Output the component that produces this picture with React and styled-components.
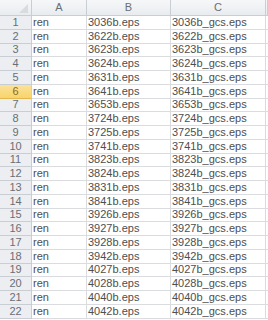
import styled, { createGlobalStyle } from "styled-components"

const GlobalStyle = createGlobalStyle`
    html, body {
        margin: 0;
        padding: 0;
        background: #ffffff;
    }
    body {
        font-family: "Liberation Sans", Arial, sans-serif;
    }
`

const rows = [
    "3036", "3622", "3623", "3624", "3631", "3641", "3653", "3724",
    "3725", "3741", "3823", "3824", "3831", "3841", "3926", "3927",
    "3928", "3942", "4027", "4028", "4040", "4042",
]

const Sheet = styled.div`
    display: grid;
    grid-template-columns: 32px 55px 84px 95px 2px;
    grid-template-rows: 16px repeat(22, 13.75px);
    width: 268px;
    height: 320px;
    overflow: hidden;
    font-size: 11px;
`
const HeadCell = styled.div`
    display: flex;
    align-items: center;
    justify-content: center;
    position: relative;
    background: linear-gradient(#f6f7f9, #e9ecef);
    border-right: 1px solid #c9ced4;
    border-bottom: 1px solid #c9ced4;
    color: #6a6e74;
    line-height: 1;
`
const RowHead = styled.div`
    display: flex;
    align-items: center;
    justify-content: center;
    background: ${(p) => (p.$active ? "linear-gradient(#fbe29a, #f8d46a)" : "#eceef1")};
    border-right: 1px solid #c9ced4;
    border-bottom: 1px solid ${(p) => (p.$active ? "#e3b750" : "#c9ced4")};
    color: ${(p) => (p.$active ? "#8a6a24" : "#6a6e74")};
    line-height: 1;
`
const Cell = styled.div`
    display: flex;
    align-items: center;
    padding-left: 1px;
    border-right: 1px solid #dadcdf;
    border-bottom: 1px solid #dadcdf;
    color: #4e4e4e;
    white-space: nowrap;
    overflow: hidden;
    line-height: 1;
`
const Filler = styled.div`
    border-bottom: 1px solid #dadcdf;
`
const Corner = styled.svg`
    position: absolute;
    right: 3px;
    bottom: 2px;
`

const App = () => {
    return (
        <>
            <GlobalStyle />
            <Sheet>
                <HeadCell>
                    <Corner width="9" height="9" viewBox="0 0 9 9">
                        <polygon points="9,0 9,9 0,9" fill="#d8dce1" />
                    </Corner>
                </HeadCell>
                <HeadCell>A</HeadCell>
                <HeadCell>B</HeadCell>
                <HeadCell>C</HeadCell>
                <HeadCell />
                {rows.map((n, i) => (
                    <Row key={n} index={i + 1} num={n} />
                ))}
            </Sheet>
        </>
    )
}

const Row = ({ index, num }) => (
    <>
        <RowHead $active={index === 6}>{index}</RowHead>
        <Cell>ren</Cell>
        <Cell>{num}b.eps</Cell>
        <Cell>{num}b_gcs.eps</Cell>
        <Filler />
    </>
)

export default App
